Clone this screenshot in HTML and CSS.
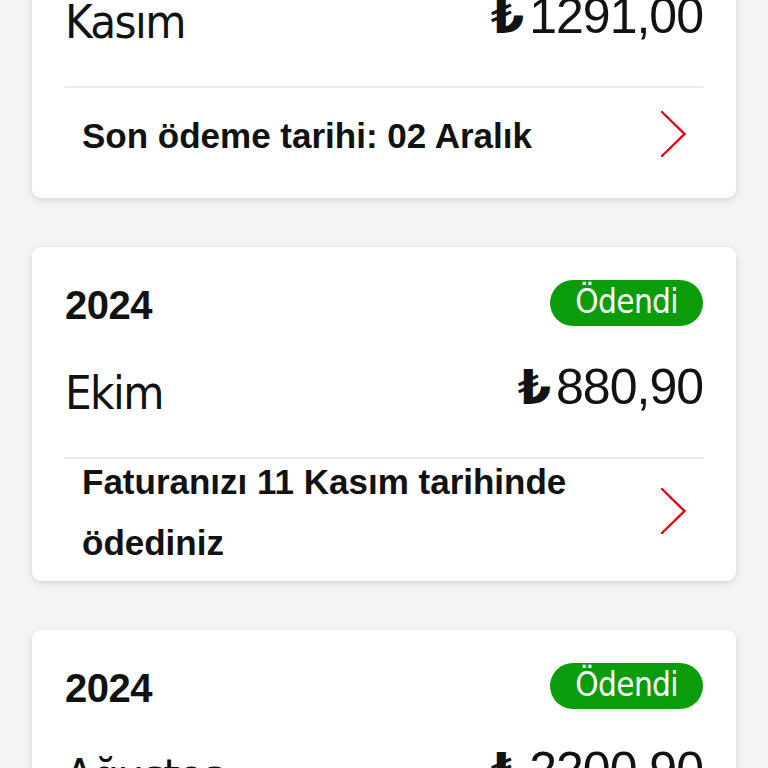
FILE: index.html
```html
<!DOCTYPE html>
<html lang="tr">
<head>
<meta charset="utf-8">
<title>Faturalar</title>
<link rel="stylesheet" href="styles.css">
</head>
<body>
<main class="list">
  <section class="card card-first">
    <div class="top-row">
      <span class="year">2024</span>
      <span class="badge badge-due">Ödenmedi</span>
    </div>
    <div class="month-row">
      <span class="month">Kasım</span>
      <span class="amount"><span class="lira">₺</span>1291,00</span>
    </div>
    <div class="divider"></div>
    <a class="info-row" href="#">
      <p class="info-text">Son ödeme tarihi: 02 Aralık</p>
      <svg class="chev" viewBox="0 0 26 46" width="26" height="46"><polyline points="2,1 24.5,23 2,45" fill="none" stroke="#e1000f" stroke-width="2.4" stroke-linecap="round" stroke-linejoin="miter"/></svg>
    </a>
  </section>

  <section class="card">
    <div class="top-row">
      <span class="year">2024</span>
      <span class="badge">Ödendi</span>
    </div>
    <div class="month-row">
      <span class="month">Ekim</span>
      <span class="amount"><span class="lira">₺</span>880,90</span>
    </div>
    <div class="divider"></div>
    <a class="info-row" href="#">
      <p class="info-text">Faturanızı 11 Kasım tarihinde ödediniz</p>
      <svg class="chev" viewBox="0 0 26 46" width="26" height="46"><polyline points="2,1 24.5,23 2,45" fill="none" stroke="#e1000f" stroke-width="2.4" stroke-linecap="round" stroke-linejoin="miter"/></svg>
    </a>
  </section>

  <section class="card">
    <div class="top-row">
      <span class="year">2024</span>
      <span class="badge">Ödendi</span>
    </div>
    <div class="month-row">
      <span class="month">Ağustos</span>
      <span class="amount"><span class="lira">₺</span>2200,90</span>
    </div>
    <div class="divider"></div>
    <a class="info-row" href="#">
      <p class="info-text">Faturanızı 10 Eylül tarihinde ödediniz</p>
      <svg class="chev" viewBox="0 0 26 46" width="26" height="46"><polyline points="2,1 24.5,23 2,45" fill="none" stroke="#e1000f" stroke-width="2.4" stroke-linecap="round" stroke-linejoin="miter"/></svg>
    </a>
  </section>
</main>
</body>
</html>
```

FILE: styles.css
```css
html, body {
  margin: 0;
  padding: 0;
  background: #f4f4f4;
}

body {
  font-family: "Liberation Sans", Arial, sans-serif;
  color: #121212;
  overflow: hidden;
}

.list {
  display: flex;
  flex-direction: column;
  gap: 49px;
  padding: 0 32px 40px;
}

.card {
  background: #ffffff;
  border-radius: 9px;
  box-shadow: 0 2px 7px rgba(0, 0, 0, 0.13);
  padding: 33px 33px 0;
}

/* page is scrolled: first card starts above the viewport */
.card-first {
  margin-top: -124px;
}

.top-row {
  display: flex;
  justify-content: space-between;
  align-items: center;
  height: 46px;
}

.year {
  font-family: "Liberation Sans", Arial, sans-serif;
  font-weight: 700;
  font-size: 40px;
  letter-spacing: -0.5px;
  line-height: 46px;
  padding-top: 4px;
}

.badge {
  display: inline-flex;
  align-items: center;
  justify-content: center;
  height: 46px;
  padding: 0 25px 2px;
  border-radius: 23px;
  background: #0a9c0a;
  color: #ffffff;
  font-family: "DejaVu Sans Condensed", "Liberation Sans", sans-serif;
  font-size: 33px;
  letter-spacing: -0.6px;
  line-height: 46px;
  box-sizing: border-box;
}

.badge-due {
  background: #e60000;
}

.month-row {
  display: flex;
  justify-content: space-between;
  align-items: center;
  height: 61px;
  margin-top: 36px;
}

.month {
  font-family: "DejaVu Sans Condensed", "Liberation Sans", sans-serif;
  font-size: 47px;
  letter-spacing: -1.6px;
  line-height: 61px;
}

.amount {
  font-family: "Liberation Sans", Arial, sans-serif;
  font-size: 50px;
  letter-spacing: -1px;
  line-height: 61px;
  margin-bottom: 10px;
  display: flex;
  align-items: baseline;
}

.lira {
  font-family: "DejaVu Sans", sans-serif;
  font-weight: 700;
  font-size: 48px;
  margin-right: 5px;
  letter-spacing: 0;
}

.divider {
  height: 2px;
  background: #ebebeb;
  margin-top: 34px;
}

.info-row {
  display: flex;
  justify-content: space-between;
  align-items: center;
  gap: 24px;
  min-height: 110px;
  padding: 0 17px;
  text-decoration: none;
  color: inherit;
}

.info-text {
  margin: -8px 0 8px;
  font-family: "Liberation Sans", Arial, sans-serif;
  font-weight: 700;
  font-size: 35px;
  line-height: 61px;
  color: #121212;
}

.chev {
  flex: 0 0 auto;
  margin: -9px 0 9px;
}
```
